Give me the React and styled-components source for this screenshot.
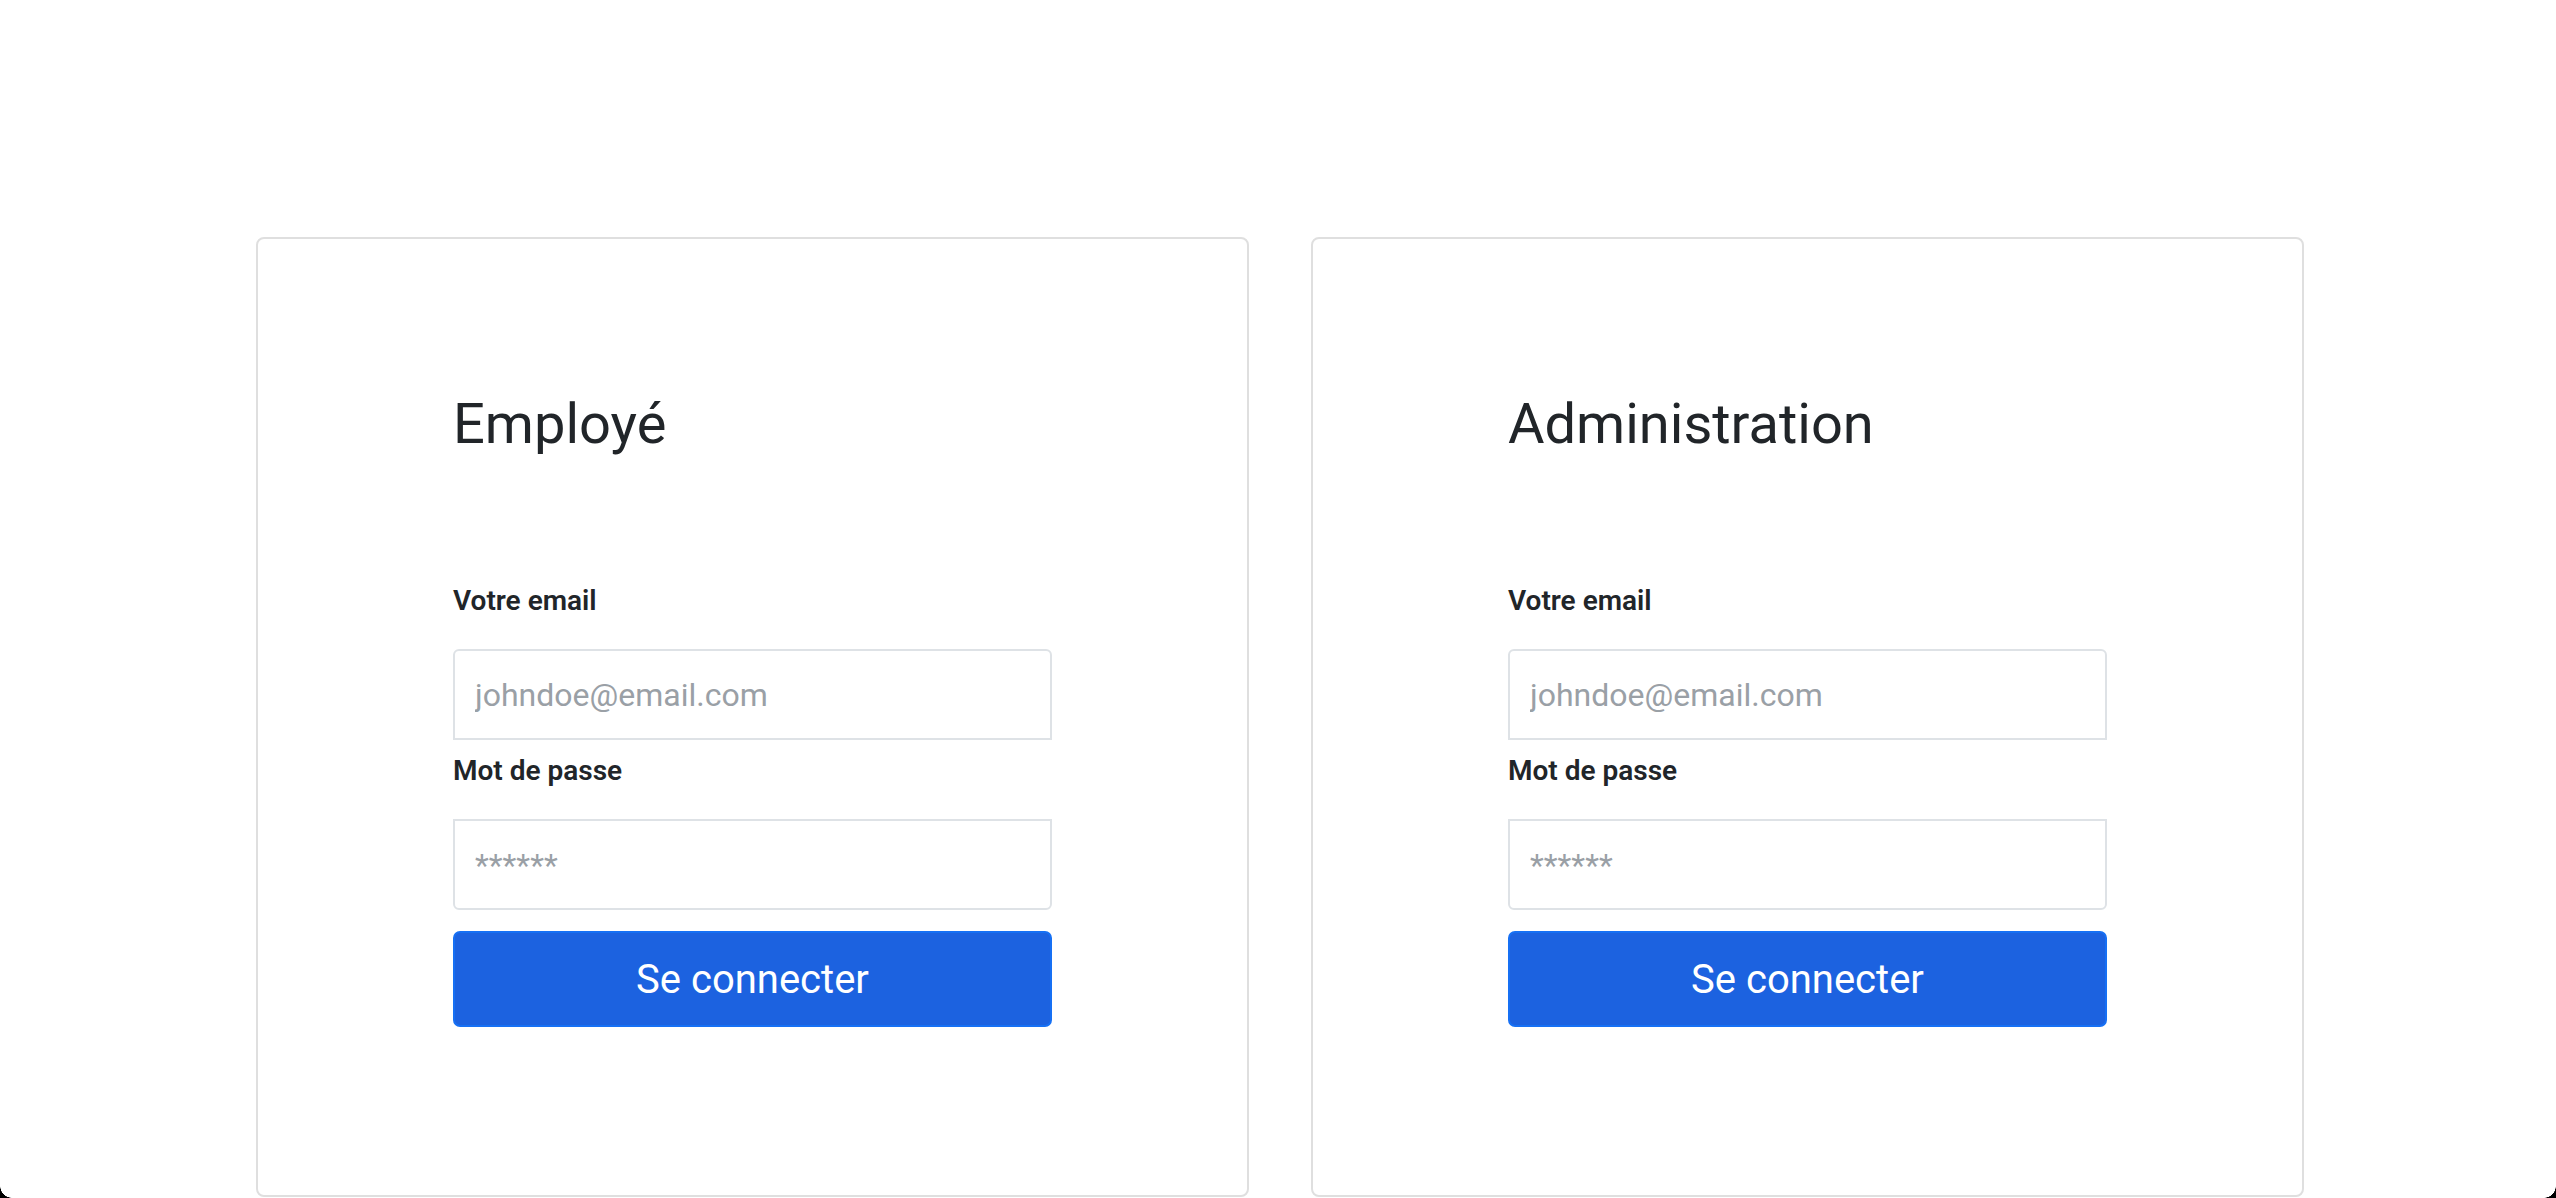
import React from "react";
import styled, { createGlobalStyle } from "styled-components";

const GlobalStyle = createGlobalStyle`
  html, body {
    margin: 0;
    padding: 0;
    background: #ffffff;
  }
  body {
    font-family: Roboto, "Liberation Sans", Arial, sans-serif;
    color: #212529;
  }
  * { box-sizing: border-box; }
`;

const Page = styled.main`
  position: relative;
  display: flex;
  align-items: flex-start;
  gap: 62px;
  min-height: 1198px;
  padding: 237px 0 0 256px;
  overflow: hidden;
`;

const WindowCorner = styled.div`
  position: fixed;
  bottom: 0;
  ${(p) => (p.$side === "left" ? "left: 0;" : "right: 0;")}
  width: 12px;
  height: 12px;
  background: radial-gradient(
    circle at ${(p) => (p.$side === "left" ? "100% 0" : "0 0")},
    transparent 11.5px,
    #000 12px
  );
  pointer-events: none;
`;

const Card = styled.section`
  width: 993px;
  border: 2px solid #dfdfdf;
  border-radius: 8px;
  background: #fff;
  padding: 153px 195px 168px;
`;

const Title = styled.h3`
  margin: 0 0 124px;
  font-size: 56px;
  line-height: 65px;
  font-weight: 400;
  color: #212529;
`;

const Form = styled.form`
  display: flex;
  flex-direction: column;
`;

const Label = styled.label`
  display: block;
  margin: ${(p) => (p.$first ? "0" : "11px")} 0 28px;
  font-size: 28px;
  line-height: 40px;
  font-weight: 600;
  color: #212529;
`;

const Input = styled.input`
  display: block;
  width: 100%;
  height: 91px;
  margin: 0;
  padding: 0 20px;
  border: 2px solid #dee2e6;
  border-radius: ${(p) => (p.$position === "top" ? "6px 6px 0 0" : "0 0 6px 6px")};
  background: #fff;
  font-family: Roboto, "Liberation Sans", Arial, sans-serif;
  font-size: 32px;
  color: #212529;
  outline: none;

  &::placeholder {
    color: #9aa0a6;
    opacity: 1;
  }
`;

const SubmitButton = styled.button`
  display: block;
  width: 100%;
  height: 96px;
  margin-top: 21px;
  border: 2px solid #1670f4;
  border-radius: 7px;
  background: #1c62e0;
  color: #ffffff;
  font-family: Roboto, "Liberation Sans", Arial, sans-serif;
  font-size: 40px;
  font-weight: 400;
  cursor: pointer;
`;

function LoginCard({ title }) {
  return (
    <Card>
      <Title>{title}</Title>
      <Form onSubmit={(e) => e.preventDefault()}>
        <Label $first>Votre email</Label>
        <Input type="email" placeholder="johndoe@email.com" $position="top" />
        <Label>Mot de passe</Label>
        <Input type="password" placeholder="******" $position="bottom" />
        <SubmitButton type="submit">Se connecter</SubmitButton>
      </Form>
    </Card>
  );
}

export default function App() {
  return (
    <>
      <GlobalStyle />
      <Page>
        <LoginCard title="Employé" />
        <LoginCard title="Administration" />
      </Page>
      <WindowCorner $side="left" />
      <WindowCorner $side="right" />
    </>
  );
}
